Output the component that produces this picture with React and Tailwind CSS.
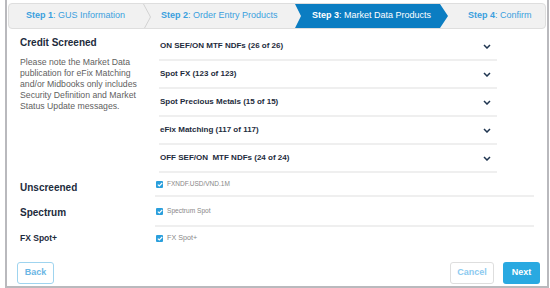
import React from "react";

const groups = [
    { name: "ON SEF/ON MTF NDFs", count: "(26 of 26)" },
    { name: "Spot FX", count: "(123 of 123)" },
    { name: "Spot Precious Metals", count: "(15 of 15)" },
    { name: "eFix Matching", count: "(117 of 117)" },
    { name: "OFF SEF/ON\u00a0\u00a0MTF NDFs", count: "(24 of 24)" },
];

const Chevron = () => (
    <svg width="8" height="5" viewBox="0 0 8 5" className="text-[#1f3550]">
        <path d="M1 1l3 3 3-3" fill="none" stroke="currentColor" strokeWidth="1.5" />
    </svg>
);

const Check = () => (
    <span className="w-[7px] h-[7px] rounded-[1px] bg-[#2a9fdc] flex items-center justify-center shrink-0">
        <svg width="6" height="5" viewBox="0 0 6 5">
            <path d="M0.8 2.6l1.5 1.4L5.2 1" fill="none" stroke="white" strokeWidth="1.1" />
        </svg>
    </span>
);

const StepSep = () => (
    <svg width="8" height="26" viewBox="0 0 8 26" className="shrink-0">
        <path d="M0.5 0l7 13-7 13" fill="none" stroke="#d2d2d2" strokeWidth="1" />
    </svg>
);

const Step = ({ n, label, className }) => (
    <div className={`flex items-center whitespace-nowrap ${className}`}>
        <b>Step {n}</b>: {label}
    </div>
);

export default function App() {
    return (
        <div className="w-[550px] h-[288px] bg-white font-['Liberation_Sans',Arial,sans-serif] overflow-hidden">
            <div className="ml-[5px] w-[544px] h-[288px] border-l-2 border-r-2 border-b-2 border-[#b9b9bd] flex flex-col">
                {/* Steps */}
                <div className="mt-[3px] mx-px h-[26px] rounded-[4px] border border-[#dedede] bg-[#f1f1f1] flex items-stretch overflow-hidden text-[9px] text-[#3aa0de]">
                    <Step n={1} label="GUS Information" className="w-[134px] pl-[17px]" />
                    <StepSep />
                    <Step n={2} label="Order Entry Products" className="w-[144px] pl-[10px]" />
                    <Step
                        n={3}
                        label="Market Data Products"
                        className="w-[153px] pl-[17px] bg-[#0b7dc2] text-white [clip-path:polygon(0_0,calc(100%-8px)_0,100%_50%,calc(100%-8px)_100%,0_100%,6px_50%)]"
                    />
                    <Step n={4} label="Confirm" className="flex-1 pl-[20px]" />
                </div>

                {/* Credit Screened */}
                <div className="flex mt-[4px]">
                    <div className="w-[152px] pl-[13px] pt-[3px] shrink-0">
                        <div className="text-[10px] leading-[14px] font-bold text-[#1d2b3c]">Credit Screened</div>
                        <p className="mt-[7px] w-[124px] text-[8.7px] leading-[11px] text-[#5f5f5f]">
                            Please note the Market Data publication for eFix Matching and/or Midbooks only includes Security Definition and Market Status Update messages.
                        </p>
                    </div>
                    <div className="w-[338px]">
                        {groups.map((g, i) => (
                            <div key={i} className="h-[28px] flex items-center justify-between pl-[1px] pr-[6px] border-b-2 border-[#efefef]">
                                <span className="text-[8px] text-[#1d2b3c] font-bold whitespace-nowrap">
                                    {g.name} {g.count}
                                </span>
                                <Chevron />
                            </div>
                        ))}
                    </div>
                </div>

                {/* Other groups */}
                <div className="flex">
                    <div className="w-[148px] shrink-0 pl-[13px] flex items-center pt-[5px] text-[10px] font-bold text-[#1d2b3c]">Unscreened</div>
                    <div className="w-[379px] h-[24px] flex items-center gap-[4px] pl-[1px] border-b-2 border-[#efefef]">
                        <Check />
                        <span className="text-[6.5px] text-[#888]">FXNDF.USD/VND.1M</span>
                    </div>
                </div>
                <div className="flex">
                    <div className="w-[148px] shrink-0 pl-[13px] flex items-center text-[10px] font-bold text-[#1d2b3c]">Spectrum</div>
                    <div className="w-[379px] h-[30px] flex items-center gap-[4px] pl-[1px] border-b-2 border-[#efefef]">
                        <Check />
                        <span className="text-[6.6px] text-[#888]">Spectrum Spot</span>
                    </div>
                </div>
                <div className="flex">
                    <div className="w-[148px] shrink-0 pl-[13px] flex items-center text-[8.5px] font-bold text-[#1d2b3c]">FX Spot+</div>
                    <div className="w-[379px] h-[22px] flex items-center gap-[4px] pl-[1px]">
                        <Check />
                        <span className="text-[7.2px] text-[#888]">FX Spot+</span>
                    </div>
                </div>

                {/* Footer */}
                <div className="mt-auto mb-[2px] flex items-center justify-between pl-[10px] pr-[7px]">
                    <button className="w-[37px] h-[22px] rounded-[3px] border border-[#9fd4ef] text-[#6ab6e4] text-[9px] font-bold">
                        Back
                    </button>
                    <div className="flex gap-[9px]">
                        <button className="w-[44px] h-[22px] rounded-[3px] border border-[#dedede] text-[#8ccaf0] text-[9px] font-bold">
                            Cancel
                        </button>
                        <button className="w-[37px] h-[22px] rounded-[3px] bg-[#29a9e1] text-white text-[9px] font-bold">
                            Next
                        </button>
                    </div>
                </div>
            </div>
        </div>
    );
}
